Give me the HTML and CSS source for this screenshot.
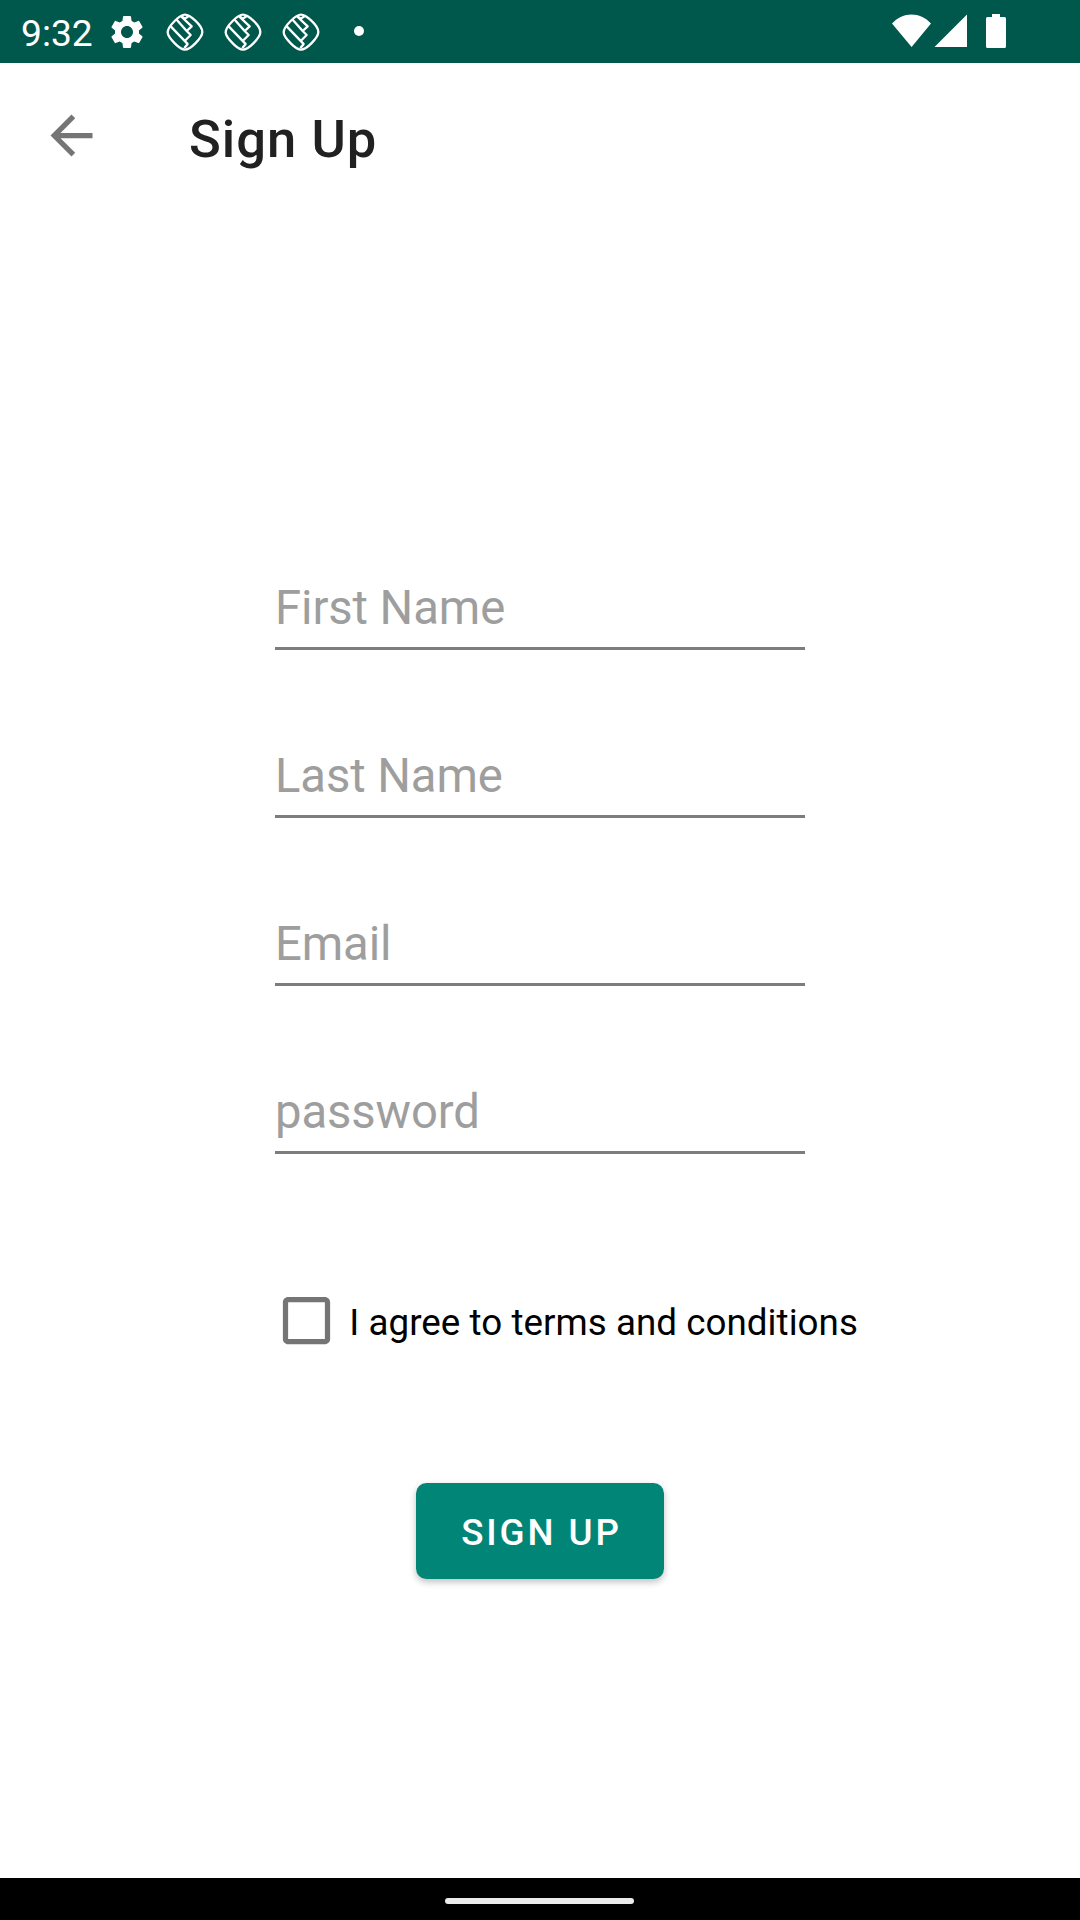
FILE: index.html
```html
<!DOCTYPE html>
<html lang="en">
<head>
<meta charset="utf-8">
<title>Sign Up</title>
<link rel="stylesheet" href="styles.css">
</head>
<body>
<svg width="0" height="0" class="defs">
  <symbol id="app" viewBox="48 37 114 114">
    <g fill="none" stroke="#fff" stroke-width="7" stroke-linejoin="round">
      <path d="M105 42C114 42 122 47 136 60S157 84 157 94S149 115 136 128S114 147 105 147S88 142 75 129S53 105 53 95S61 74 74 61S96 42 105 42Z"/>
      <path d="M60 75L114 131M80 57L110 91M92 46L125 77L110 91L122 103L104 121M114 129L103 142M94 47L105 54L116 46"/>
    </g>
  </symbol>
</svg>
<div class="screen">
  <header class="status">
    <span class="clock">9:32</span>
    <svg class="gear" viewBox="0 0 24 24"><path fill="#fff" d="M19.140 12.940c.04-.3.060-.610.060-.940 0-.320-.020-.640-.070-.940l2.030-1.580c.180-.140.230-.410.120-.610l-1.920-3.320c-.120-.220-.370-.290-.590-.220l-2.390.960c-.5-.380-1.030-.7-1.620-.940l-.360-2.540c-.040-.240-.240-.410-.480-.410h-3.840c-.240 0-.430.170-.470.410l-.360 2.540c-.590.240-1.130.570-1.620.940l-2.390-.960c-.220-.080-.470 0-.590.220L2.740 8.870c-.120.210-.080.470.120.610l2.030 1.580c-.050.300-.090.630-.090.940s.020.640.070.940l-2.030 1.580c-.180.140-.230.410-.120.610l1.920 3.320c.120.220.370.290.590.220l2.390-.960c.5.380 1.030.7 1.620.940l.360 2.540c.050.240.240.410.480.410h3.840c.240 0 .440-.170.470-.410l.360-2.540c.590-.240 1.130-.560 1.620-.940l2.390.960c.220.080.470 0 .590-.220l1.920-3.320c.120-.220.070-.470-.120-.610l-2.010-1.580zM12 15.600c-1.980 0-3.600-1.620-3.600-3.600s1.620-3.600 3.600-3.600 3.600 1.620 3.600 3.600-1.620 3.600-3.600 3.600z"/></svg>
    <div class="notifications">
      <svg class="app"><use href="#app"/></svg>
      <svg class="app"><use href="#app"/></svg>
      <svg class="app"><use href="#app"/></svg>
    </div>
    <span class="dot"></span>
    <svg class="system" viewBox="0 0 116 36" fill="#fff">
      <path d="M0 9.500C11-2.500 28-2.500 39 9.500L19.600 33Z"/>
      <path d="M42.500 33L75 .5V33Z"/>
      <path d="M100 0h8v3h4.500q1.500 0 1.500 1.500v28q0 1.500-1.500 1.500h-17q-1.500 0-1.500-1.500v-28q0-1.500 1.500-1.500h4.500z"/>
    </svg>
  </header>
  <nav class="toolbar">
    <svg class="back" viewBox="0 0 24 24"><path fill="#757575" d="M20 11H7.830l5.590-5.590L12 4l-8 8 8 8 1.410-1.410L7.830 13H20v-2z"/></svg>
    <h1 class="title">Sign Up</h1>
  </nav>
  <main class="form">
    <div class="field">First Name</div>
    <div class="field">Last Name</div>
    <div class="field">Email</div>
    <div class="field">password</div>
    <label class="terms">
      <svg class="box" viewBox="0 0 24 24"><path fill="#757575" d="M19 5v14H5V5h14m0-2H5c-1.100 0-2 .9-2 2v14c0 1.100.9 2 2 2h14c1.100 0 2-.9 2-2V5c0-1.100-.9-2-2-2z"/></svg>
      <span class="agree">I agree to terms and conditions</span>
    </label>
    <button class="submit">SIGN UP</button>
  </main>
  <footer class="navbar"><span class="handle"></span></footer>
</div>
</body>
</html>
```
FILE: styles.css
```css
* { box-sizing: border-box; }
body { margin: 0; background: #fff; font-family: Roboto, sans-serif; }
svg { display: block; flex: none; }
.defs { display: none; }
.screen { width: 1080px; height: 1920px; display: flex; flex-direction: column; overflow: hidden; }

.status { height: 63px; flex: none; display: flex; align-items: flex-start; background: #00574b; color: #fff; padding-left: 21px; }
.clock { width: 86px; font-size: 37.200px; line-height: 66px; white-space: nowrap; }
.gear { width: 40px; height: 40px; margin-top: 12px; }
.notifications { display: flex; gap: 20px; margin: 13px 0 0 19px; }
.app { width: 38px; height: 38px; }
.dot { width: 10px; height: 10px; border-radius: 50%; background: #fff; margin: 26px 0 0 34px; }
.system { width: 116px; height: 36px; margin: 14px 72px 0 auto; }

.toolbar { height: 147px; flex: none; display: flex; align-items: flex-start; padding-left: 40px; }
.back { width: 63px; height: 63px; margin-top: 41px; }
.title { margin: 47px 0 0 86px; font-size: 52.500px; line-height: 58px; font-weight: 500; color: #212121; letter-spacing: 1.050px; white-space: nowrap; }

.form { flex: 1; display: flex; flex-direction: column; padding: 356px 275px 0; }
.field { height: 84px; margin-bottom: 84px; font-size: 47.250px; line-height: 85px; color: #9e9e9e; border-bottom: 3px solid #7d7d7d; white-space: nowrap; letter-spacing: -0.100px; }
.terms { display: flex; align-items: flex-start; height: 63px; margin-top: 51px; }
.agree { margin-left: 11px; font-size: 36.750px; line-height: 67px; color: #000; white-space: nowrap; letter-spacing: 0.040px; }
.box { width: 63px; height: 63px; margin-left: 0.300px; }
.submit { width: 248px; height: 96px; align-self: center; margin-top: 131px; padding: 3px 0 0 3px; border: 0; border-radius: 10.500px; background: #018577; color: #fff; font: 500 36.750px/93px Roboto, sans-serif; letter-spacing: 2.900px; box-shadow: 0 3px 7px rgba(0, 0, 0, .25); }

.navbar { height: 42px; flex: none; background: #000; display: flex; justify-content: center; padding: 20px 2px 0 0; }
.handle { width: 189px; height: 6px; border-radius: 3px; background: #ebebeb; }
```
